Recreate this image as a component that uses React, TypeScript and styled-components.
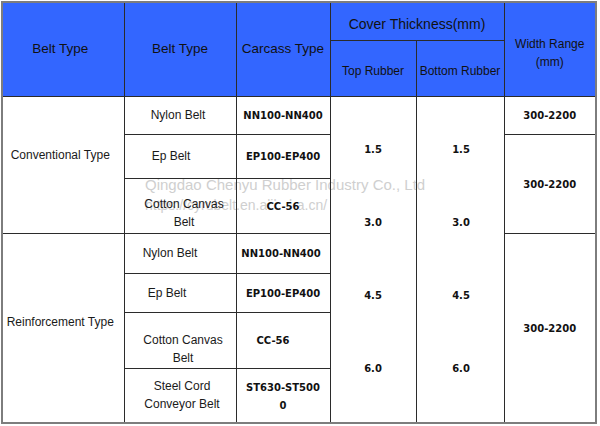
import React from "react";
import styled, { createGlobalStyle } from "styled-components";

const Global = createGlobalStyle`
  html, body { margin: 0; padding: 0; background: #fff; }
  body { font-family: "Liberation Sans", Arial, sans-serif; }
`;

const Page = styled.div`
  position: relative;
  width: 600px;
  height: 426px;
  padding: 1px 0 0 1px;
  box-sizing: border-box;
  overflow: hidden;
`;

const Watermark = styled.div`
  position: absolute;
  left: 145px;
  top: 175px;
  z-index: 0;
  font-family: "Liberation Sans", Arial, sans-serif;
  color: #cfcfcf;
  font-size: 15px;
  line-height: 20px;
  white-space: nowrap;
  pointer-events: none;
`;

const WatermarkUrl = styled.div`
  font-size: 14px;
`;

const Frame = styled.div`
  position: relative;
  z-index: 1;
  width: 592px;
  height: 419px;
  border: 2px solid #7d7d7d;
`;

const Table = styled.table`
  width: 592px;
  height: 419px;
  border-collapse: collapse;
  border-style: hidden;
  table-layout: fixed;
`;

const Col = styled.col<{ $w: number }>`
  width: ${(p) => p.$w}px;
`;

const Row = styled.tr<{ $h: number }>`
  height: ${(p) => p.$h}px;
`;

const pad = (pt = 0, pb = 0, shift = 0) =>
  `${pt}px ${shift < 0 ? -2 * shift : 0}px ${pb}px ${shift > 0 ? 2 * shift : 0}px`;

const Head = styled.th<{ $pt?: number; $size?: number; $shift?: number }>`
  background: #3366ff;
  color: #111;
  font-weight: normal;
  font-size: ${(p) => p.$size ?? 12}px;
  border: 1px solid #2b2b2b;
  padding: ${(p) => pad(p.$pt, 0, p.$shift)};
  line-height: 18px;
  vertical-align: middle;
  text-align: center;
`;

const Cell = styled.td<{ $shift?: number; $pt?: number; $pb?: number }>`
  border: 1px solid #2b2b2b;
  font-size: 12px;
  color: #1a1a1a;
  text-align: center;
  vertical-align: middle;
  line-height: 18px;
  padding: ${(p) => pad(p.$pt, p.$pb, p.$shift)};
`;

const Value = styled.span`
  font-family: "DejaVu Sans", Verdana, sans-serif;
  font-weight: bold;
  font-size: 10px;
  color: #111;
  background: #fff;
  line-height: 14px;
`;

const ValueBlock = styled.div`
  font-family: "DejaVu Sans", Verdana, sans-serif;
  font-weight: bold;
  font-size: 10px;
  color: #111;
  line-height: 18px;
`;

const Stack = styled.div`
  display: flex;
  flex-direction: column;
  align-items: center;
  gap: 59px;
`;

const thickness = ["1.5", "3.0", "4.5", "6.0"];

export default function App() {
  return (
    <>
      <Global />
      <Page>
        <Watermark>
          <div>Qingdao Chenyu Rubber Industry Co., Ltd</div>
          <WatermarkUrl>https://cyrubelt.en.alibaba.cn/</WatermarkUrl>
        </Watermark>
        <Frame>
          <Table>
            <colgroup>
              <Col $w={121} />
              <Col $w={112} />
              <Col $w={94} />
              <Col $w={86} />
              <Col $w={88} />
              <Col $w={91} />
            </colgroup>
            <tbody>
              <Row $h={37}>
                <Head rowSpan={2} $size={13.5} $shift={-3}>
                  Belt Type
                </Head>
                <Head rowSpan={2} $size={13.5}>
                  Belt Type
                </Head>
                <Head rowSpan={2} $size={13.5}>
                  Carcass Type
                </Head>
                <Head colSpan={2} $size={14} $pt={6}>
                  Cover Thickness(mm)
                </Head>
                <Head rowSpan={2} $pt={8}>
                  Width Range
                  <br />
                  (mm)
                </Head>
              </Row>
              <Row $h={56}>
                <Head $pt={6}>Top Rubber</Head>
                <Head $pt={6}>Bottom Rubber</Head>
              </Row>

              <Row $h={38}>
                <Cell rowSpan={3} $shift={-3} $pb={19}>
                  Conventional Type
                </Cell>
                <Cell $shift={-2}>Nylon Belt</Cell>
                <Cell>
                  <Value>NN100-NN400</Value>
                </Cell>
                <Cell rowSpan={7}>
                  <Stack>
                    {thickness.map((t) => (
                      <Value key={t}>{t}</Value>
                    ))}
                  </Stack>
                </Cell>
                <Cell rowSpan={7} $shift={1}>
                  <Stack>
                    {thickness.map((t) => (
                      <Value key={t}>{t}</Value>
                    ))}
                  </Stack>
                </Cell>
                <Cell>
                  <Value>300-2200</Value>
                </Cell>
              </Row>
              <Row $h={44}>
                <Cell $shift={-9}>Ep Belt</Cell>
                <Cell>
                  <Value>EP100-EP400</Value>
                </Cell>
                <Cell rowSpan={2}>
                  <Value>300-2200</Value>
                </Cell>
              </Row>
              <Row $h={55}>
                <Cell $shift={4} $pt={14}>
                  Cotton Canvas
                  <br />
                  Belt
                </Cell>
                <Cell>
                  <Value>CC-56</Value>
                </Cell>
              </Row>

              <Row $h={40}>
                <Cell rowSpan={4} $shift={-3} $pb={12}>
                  Reinforcement Type
                </Cell>
                <Cell $shift={-10}>Nylon Belt</Cell>
                <Cell $shift={-2}>
                  <Value>NN100-NN400</Value>
                </Cell>
                <Cell rowSpan={4}>
                  <Value>300-2200</Value>
                </Cell>
              </Row>
              <Row $h={39}>
                <Cell $shift={-13}>Ep Belt</Cell>
                <Cell>
                  <Value>EP100-EP400</Value>
                </Cell>
              </Row>
              <Row $h={56}>
                <Cell $shift={3} $pt={18}>
                  Cotton Canvas
                  <br />
                  Belt
                </Cell>
                <Cell $shift={-10}>
                  <Value>CC-56</Value>
                </Cell>
              </Row>
              <Row $h={54}>
                <Cell $shift={2}>
                  Steel Cord
                  <br />
                  Conveyor Belt
                </Cell>
                <Cell $pt={3}>
                  <ValueBlock>
                    ST630-ST500
                    <br />0
                  </ValueBlock>
                </Cell>
              </Row>
            </tbody>
          </Table>
        </Frame>
      </Page>
    </>
  );
}
